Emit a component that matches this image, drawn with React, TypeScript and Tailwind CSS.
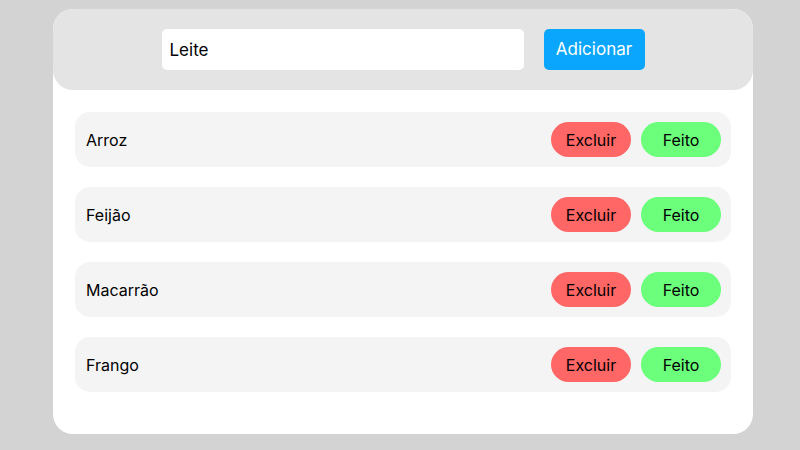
import React, { useState } from 'react'

const items = ['Arroz', 'Feijão', 'Macarrão', 'Frango']

export default function App() {
  const [value, setValue] = useState('Leite')

  return (
    <div className="min-h-[450px] w-full bg-[#d3d3d3] pt-[9px] font-['Inter',sans-serif] text-black">
      <div className="ml-[53px] w-[700px] h-[425px] rounded-[20px] bg-white">
        {/* Header */}
        <div className="flex h-[81px] items-center justify-center gap-5 rounded-[20px] bg-[#e4e4e4]">
          <input
            value={value}
            onChange={(e) => setValue(e.target.value)}
            className="h-[41px] w-[362px] rounded-[5px] bg-white px-2 text-[17px] outline-none"
          />
          <button className="h-[41px] w-[101px] rounded-[5px] bg-[#0aa5fc] text-[17px] text-white">
            Adicionar
          </button>
        </div>

        {/* List */}
        <div className="flex flex-col gap-5 px-[22px] pt-[22px]">
          {items.map((item) => (
            <div
              key={item}
              className="flex h-[55px] items-center justify-between rounded-[15px] bg-[#f4f4f4] pl-[11px] pr-[10px]"
            >
              <span className="text-[16px]">{item}</span>
              <div className="flex gap-[10px]">
                <button className="h-[35px] w-[80px] rounded-full bg-[#ff6666] text-[16px]">Excluir</button>
                <button className="h-[35px] w-[80px] rounded-full bg-[#6bff7b] text-[16px]">Feito</button>
              </div>
            </div>
          ))}
        </div>
      </div>
    </div>
  )
}
